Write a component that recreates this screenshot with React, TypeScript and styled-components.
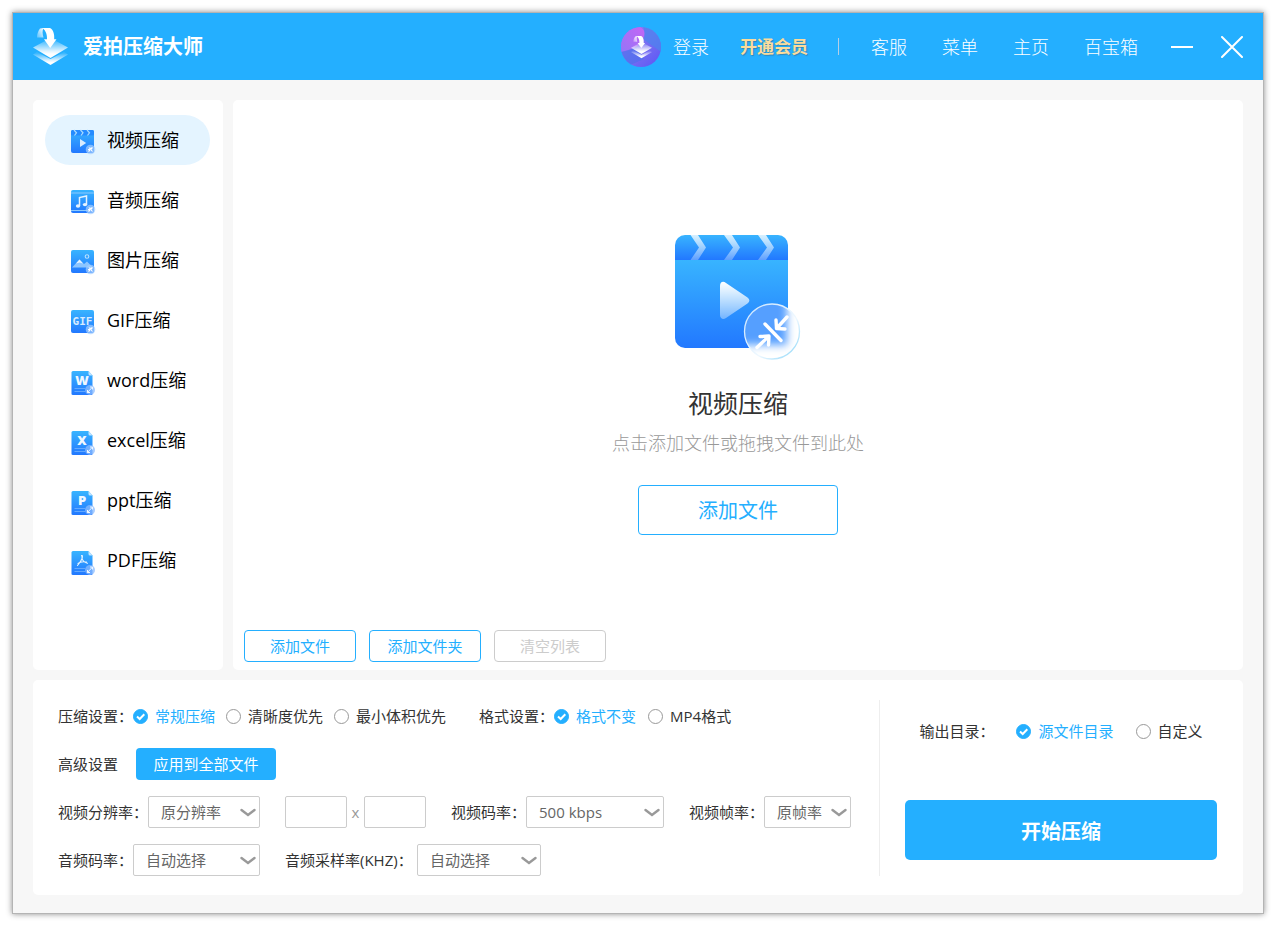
import React, { useId } from "react";
import styled, { createGlobalStyle, css } from "styled-components";

const blue = "#24afff";

const GlobalStyle = createGlobalStyle`
  *, *::before, *::after { box-sizing: border-box; }
  body {
    margin: 0;
    background: #fff;
    color: #333;
    font: 15px/20px "Open Sans", "Noto Sans CJK SC", sans-serif;
  }
  button, input, select { font: inherit; color: inherit; margin: 0; }
  button { cursor: pointer; }
`;

const Page = styled.div`
  min-height: 100vh;
  padding: 13px 12px 12px 13px;
  display: flex;
`;

const AppWindow = styled.div`
  flex: 1;
  display: flex;
  flex-direction: column;
  background: #f7f7f7;
  box-shadow: 0 0 0 1px #b4b4b4, 0 0 6px 1px rgba(0, 0, 0, 0.45);
`;

const Header = styled.header`
  height: 67px;
  padding: 0 20px;
  display: flex;
  align-items: center;
  background: ${blue};
  color: #fff;
`;

const Brand = styled.h1`
  margin: 0 auto 0 15px;
  font-size: 20px;
  line-height: 28px;
  font-weight: 700;
`;

const HeaderLink = styled.a`
  color: #fff;
  font-size: 18px;
  line-height: 24px;
  font-weight: 300;
  text-decoration: none;
`;

const Account = styled.div`
  display: flex;
  align-items: center;
  gap: 12px;
`;

const Vip = styled.a`
  margin: 0 30px 0 31px;
  font-size: 17px;
  line-height: 24px;
  font-weight: 700;
  text-decoration: none;
  color: #fbdc9d;
  text-shadow: 1px 1px 1px rgba(60, 100, 120, 0.55);
`;

const Separator = styled.span`
  width: 1px;
  height: 17px;
  background: #b5cfe6;
`;

const Nav = styled.nav`
  display: flex;
  gap: 35px;
  margin: 0 33px 0 32px;
`;

const WindowButtons = styled.div`
  display: flex;
  gap: 28px;
`;

const WindowButton = styled.button`
  width: 22px;
  height: 22px;
  padding: 0;
  border: 0;
  background: none;
  display: flex;
`;

const Body = styled.div`
  flex: 1;
  display: flex;
  flex-direction: column;
  gap: 10px;
  padding: 20px 20px 18px;
`;

const Workspace = styled.div`
  flex: 1;
  display: flex;
  gap: 10px;
`;

const Sidebar = styled.nav`
  width: 190px;
  padding: 15px 13px 15px 12px;
  display: flex;
  flex-direction: column;
  gap: 10px;
  background: #fff;
  border-radius: 5px;
`;

const SideItem = styled.a<{ $active?: boolean }>`
  height: 50px;
  padding-left: 25px;
  display: flex;
  align-items: center;
  gap: 11px;
  border-radius: 25px;
  background: ${(p) => (p.$active ? "#e4f4ff" : "transparent")};
  color: #000;
  font-size: 18px;
  line-height: 24px;
  text-decoration: none;
`;

const MainPanel = styled.main`
  flex: 1;
  display: flex;
  flex-direction: column;
  padding: 0 11px 8px;
  background: #fff;
  border-radius: 5px;
`;

const DropZone = styled.section`
  flex: 1;
  padding-top: 40px;
  display: flex;
  flex-direction: column;
  align-items: center;
  justify-content: center;
`;

const DropTitle = styled.h2`
  margin: 25px 0 10px;
  font-size: 25px;
  line-height: 36px;
  font-weight: 400;
`;

const DropHint = styled.p`
  margin: 0 0 30px;
  font-size: 18px;
  line-height: 24px;
  font-weight: 300;
  color: #999;
`;

const OutlineButton = styled.button<{ $large?: boolean }>`
  width: ${(p) => (p.$large ? 200 : 112)}px;
  height: ${(p) => (p.$large ? 50 : 32)}px;
  padding: ${(p) => (p.$large ? "2px 0 0" : "0")};
  border: 1px solid ${blue};
  border-radius: 4px;
  background: #fff;
  color: ${blue};
  font-size: ${(p) => (p.$large ? 20 : 15)}px;
  &:disabled { border-color: #ccc; color: #ccc; cursor: default; }
`;

const ListActions = styled.div`
  display: flex;
  gap: 13px;
`;

const SettingsPanel = styled.form`
  display: flex;
  padding: 20px 26px 19px 25px;
  background: #fff;
  border-radius: 5px;
`;

const SettingsRows = styled.div`
  flex: 1;
  display: flex;
  flex-direction: column;
  gap: 16px;
`;

const Row = styled.div<{ $gap?: number }>`
  height: 32px;
  display: flex;
  align-items: center;
  gap: ${(p) => p.$gap ?? 25}px;
  white-space: nowrap;
`;

const Field = styled.div<{ $labelWidth?: number }>`
  display: flex;
  align-items: center;
  label { min-width: ${(p) => p.$labelWidth ?? 0}px; }
`;

const Group = styled.fieldset<{ $gap: number; $labelGap: number }>`
  display: flex;
  align-items: center;
  gap: ${(p) => p.$gap}px;
  margin: 0;
  padding: 0;
  border: 0;
  legend { float: left; padding: 0; margin-right: ${(p) => p.$labelGap - p.$gap}px; }
`;

const Option = styled.label`
  display: flex;
  align-items: center;
  gap: 7px;
  cursor: pointer;
  &:has(input:checked) { color: ${blue}; }
`;

const RadioMark = styled.span`
  position: relative;
  display: flex;
  width: 15px;
  height: 15px;
  svg { position: absolute; inset: 0; visibility: hidden; pointer-events: none; }
  input:checked + svg { visibility: visible; }
`;

const RadioInput = styled.input`
  appearance: none;
  width: 15px;
  height: 15px;
  border: 1px solid #999;
  border-radius: 50%;
  background: #fff;
  &:checked { background: ${blue}; border-color: ${blue}; }
`;

const solid = css`
  border: 0;
  background: ${blue};
  color: #fff;
`;

const ApplyButton = styled.button`
  ${solid}
  width: 140px;
  height: 32px;
  padding: 0;
  border-radius: 4px;
`;

const StartButton = styled.button`
  ${solid}
  height: 60px;
  padding: 3px 0 0;
  border-radius: 5px;
  font-size: 20px;
  font-weight: 700;
`;

const SelectBox = styled.span<{ $width: number }>`
  position: relative;
  display: flex;
  width: ${(p) => p.$width}px;
  svg { position: absolute; right: 4px; top: 12px; pointer-events: none; }
`;

const SelectInput = styled.select`
  appearance: none;
  width: 100%;
  height: 32px;
  padding: 0 20px 0 12px;
  border: 1px solid #ccc;
  border-radius: 2px;
  background: #fff;
  color: #666;
`;

const SizeInputs = styled.div`
  display: flex;
  align-items: center;
  color: #999;
  span { width: 17px; text-align: center; }
`;

const SizeInput = styled.input`
  width: 62px;
  height: 32px;
  padding: 0 6px;
  border: 1px solid #ccc;
  border-radius: 2px;
  background: #fff;
`;

const OutputColumn = styled.div`
  width: 338px;
  padding: 15px 0 15px 25px;
  border-left: 1px solid #eee;
  display: flex;
  flex-direction: column;
  gap: 53px;
`;

const OutputRow = styled.div`
  height: 32px;
  display: flex;
  align-items: center;
  justify-content: center;
  white-space: nowrap;
`;

function LogoShapes() {
  const id = useId();
  return (
    <>
      <defs>
        <linearGradient id={id} x1="0" y1="0" x2="0" y2="1">
          <stop offset="0.1" stopColor="#fff" stopOpacity="0.1" />
          <stop offset="0.65" stopColor="#fff" stopOpacity="0.85" />
          <stop offset="0.8" stopColor="#fff" />
        </linearGradient>
        <linearGradient id={id + "t"} x1="1" y1="0" x2="0" y2="1">
          <stop offset="0" stopColor="#fff" />
          <stop offset="1" stopColor="#fff" stopOpacity="0.25" />
        </linearGradient>
      </defs>
      <path d="M0 27.5 4 25 17.500 32 31 25 35 27.500 17.500 38Z" fill={`url(#${id})`} />
      <path d="M0 20.500 17.500 11 35 20.500 17.500 31Z" fill={`url(#${id})`} />
      <path d="M7 1.500 10.500 1C9 4 9.500 7 10.500 10.500H4C4 7 5 4 7 1.500Z" fill={`url(#${id}t)`} />
      <path d="M9.500 1H17C20.500 3 21.500 7 21.200 12.300H23.500L17.200 21 11 12.300H14C14.200 7.500 13 4 9.500 1Z" fill="#fff" />
    </>
  );
}

function Logo() {
  return (
    <svg width="35" height="39" viewBox="0 0 35 39" aria-hidden="true">
      <LogoShapes />
    </svg>
  );
}

function Avatar() {
  return (
    <svg width="40" height="40" viewBox="0 0 40 40" aria-hidden="true">
      <defs>
        <linearGradient id="avatar" x1="0" y1="0" x2="1" y2="1">
          <stop offset="0" stopColor="#a275f4" />
          <stop offset="0.45" stopColor="#7b72f2" />
          <stop offset="1" stopColor="#5b55f4" />
        </linearGradient>
        <linearGradient id="avatarPink" x1="1" y1="0" x2="0" y2="1">
          <stop offset="0" stopColor="#c565f5" />
          <stop offset="1" stopColor="#9475f7" />
        </linearGradient>
        <clipPath id="avatarClip"><circle cx="20" cy="20" r="20" /></clipPath>
      </defs>
      <g clipPath="url(#avatarClip)">
        <rect width="40" height="40" fill="url(#avatar)" />
        <path d="M19 0C30 6 22 22 0 25V0Z" fill="url(#avatarPink)" />
        <path d="M22 0C24 4 24 8 22 12L40 25V0Z" fill="#4e83ee" opacity=".75" />
        <path d="M0 25C7 23 12 22 15 20L23 32 9 38 0 34Z" fill="#4e70ed" opacity=".7" />
      </g>
      <g transform="translate(10 8.500) scale(.6)"><LogoShapes /></g>
    </svg>
  );
}

function VideoArt() {
  return (
    <svg width="127" height="125" viewBox="0 0 127 125" aria-hidden="true">
      <defs>
        <linearGradient id="tile" x1="0" y1="0" x2="0" y2="1">
          <stop offset="0" stopColor="#38b4ff" />
          <stop offset="1" stopColor="#2278ff" />
        </linearGradient>
        <linearGradient id="artWhite" x1="0" y1="0" x2="0" y2="1">
          <stop offset="0" stopColor="#fff" />
          <stop offset="1" stopColor="#fff" stopOpacity="0.35" />
        </linearGradient>
        <linearGradient id="rim" x1="0" y1="0" x2="1" y2="1">
          <stop offset="0" stopColor="#c6e3ff" />
          <stop offset="0.6" stopColor="#eef8ff" />
          <stop offset="0.9" stopColor="#9ddcfa" />
        </linearGradient>
        <clipPath id="tileClip"><rect width="113" height="113" rx="10" /></clipPath>
        <clipPath id="badgeClip"><circle cx="97" cy="96.500" r="27.500" /></clipPath>
        <filter id="soft" x="-30%" y="-30%" width="160%" height="160%"><feGaussianBlur stdDeviation="4" /></filter>
      </defs>
      <g clipPath="url(#tileClip)">
        <rect y="25" width="113" height="88" fill="url(#tile)" />
        <rect width="113" height="25" fill="url(#tile)" />
        <path d="M15.500 0H23L31 12.500 23 25H15.500L24 12.500ZM49 0H57L65 12.500 57 25H49L58 12.500ZM83 0H91L99 12.500 91 25H83L92 12.500Z" fill="url(#artWhite)" opacity=".8" />
      </g>
      <path d="M45 51C45 47 48 45.500 51 48L72.500 62.500C75 64.500 75 66.500 72.500 68.500L51 83C48 85 45 83.500 45 80Z" fill="url(#artWhite)" />
      <g clipPath="url(#badgeClip)">
        <rect x="68" y="68" width="58" height="58" fill="#fff" />
        <rect x="50" y="50" width="62" height="60" fill="#559fff" filter="url(#soft)" />
      </g>
      <circle cx="97" cy="96.500" r="27.500" fill="none" stroke="url(#rim)" strokeWidth="1.300" />
      <g fill="none" stroke="#fff" strokeWidth="3.400" strokeLinecap="round" strokeLinejoin="round">
        <path d="M90 89 106 105.500M112 82 102 93M101 85 101.500 93.500 110 94M82 112.500 93 102M85 101.500 94 101 93.500 110" />
      </g>
    </svg>
  );
}

type Kind = "video" | "audio" | "image" | "gif" | "word" | "excel" | "ppt" | "pdf";

function TypeIcon({ kind }: { kind: Kind }) {
  const id = useId();
  const isDoc = kind === "word" || kind === "excel" || kind === "ppt" || kind === "pdf";
  const letter = { word: "W", excel: "X", ppt: "P" }[kind as string];
  return (
    <svg width="26" height="30" viewBox={isDoc ? "0 -4 26 30" : "0 -3 26 30"} aria-hidden="true">
      <defs>
        <linearGradient id={id} x1="0" y1="0" x2="0" y2="1">
          <stop offset="0" stopColor="#38b4ff" />
          <stop offset="1" stopColor="#2278ff" />
        </linearGradient>
      </defs>
      {isDoc ? (
        <>
          <path d="M3 2H18.500L22.500 6.500V25Q22.500 26 21.500 26H3Q1.500 26 1.500 25V3.500Q1.500 2 3 2Z" fill={`url(#${id})`} />
          <path d="M18.500 2V5Q18.500 6.500 20 6.500H22.500Z" fill="#c2e4ff" />
          <path d="M4.500 19.500H15M4.500 22.500H15" stroke="#69adff" strokeWidth="0.900" />
          {letter && (
            <text x="12" y="16" textAnchor="middle" fontFamily="Open Sans, sans-serif" fontSize="13" fontWeight="800" fill="#f0f8ff">{letter}</text>
          )}
          {kind === "pdf" && (
            <path d="M11.500 6.500C13.500 6 12.500 11 7.500 16.500M11.800 7C11.800 11 14 13.500 17.500 14.300M8 14.500C10 12.800 13 12.300 16.500 13" fill="none" stroke="#e6f3ff" strokeWidth="1.100" strokeLinecap="round" />
          )}
          <circle cx="20" cy="21" r="5" fill="#8bbcff" opacity=".75" />
          <path d="M17.500 23.500 22.500 18M17.500 21V23.500H20M20 18H22.500V20.500" fill="none" stroke="#f2f8ff" strokeWidth="1" />
        </>
      ) : (
        <>
          <rect x="1" y="2" width="23" height="23" rx="2" fill={`url(#${id})`} />
          {kind === "video" && (
            <>
              <rect x="1" y="2" width="23" height="5.500" rx="1.500" fill="#258bff" />
              <path d="M4 2 6.500 4.800 4.500 7.500M10.500 2 13 4.800 11 7.500M17 2 19.500 4.800 17.500 7.500" fill="none" stroke="#a9dcff" strokeWidth="1.200" />
              <path d="M10 11V19L16.200 15Z" fill="#d8ecff" />
            </>
          )}
          {kind === "audio" && (
            <>
              <path d="M1 5H24M1 22.500H20" stroke="#8ccaff" strokeWidth="1" />
              <path d="M9.500 18V9.500L16.500 8V16.500" fill="none" stroke="#e6f3ff" strokeWidth="1.500" />
              <ellipse cx="8" cy="18" rx="2.200" ry="1.700" fill="#e6f3ff" />
              <ellipse cx="15" cy="16.600" rx="2.200" ry="1.700" fill="#e6f3ff" />
            </>
          )}
          {kind === "image" && (
            <>
              <path d="M2 19.500 9.500 11.500 14 16 17 13.500 23 19.500Z" fill="#8cc5ff" />
              <path d="M6 15.500 9.500 11.500 13 15.500 9.500 14.500Z" fill="#e8f4ff" />
              <circle cx="17" cy="8.500" r="1.800" fill="none" stroke="#b8e0ff" strokeWidth="1.100" />
            </>
          )}
          {kind === "gif" && (
            <text x="12.500" y="17" textAnchor="middle" fontFamily="DejaVu Sans Mono, monospace" fontSize="11" fontWeight="700" fill="#d6ebff">GIF</text>
          )}
          <circle cx="20.500" cy="21.500" r="4.800" fill="#a4ceff" opacity=".7" />
          <path d="M18.500 23.500 20 22M22.500 19.500 21 21M18 21.500H20M21 21.500V19.500M19 19.500 22.500 23.500" fill="none" stroke="#fff" strokeWidth="1.100" />
        </>
      )}
    </svg>
  );
}

function Radio({ name, label, checked }: { name: string; label: string; checked?: boolean }) {
  return (
    <Option>
      <RadioMark>
        <RadioInput type="radio" name={name} defaultChecked={checked} />
        <svg width="15" height="15" viewBox="0 0 15 15" aria-hidden="true">
          <path d="M4 7.500 6.700 10 11.300 5.300" fill="none" stroke="#fff" strokeWidth="2" />
        </svg>
      </RadioMark>
      {label}
    </Option>
  );
}

interface SelectFieldProps {
  label: string;
  value: string;
  width: number;
  labelWidth?: number;
}

function SelectField({ label, value, width, labelWidth }: SelectFieldProps) {
  const id = useId();
  return (
    <Field $labelWidth={labelWidth}>
      <label htmlFor={id}>{label}</label>
      <SelectBox $width={width}>
        <SelectInput id={id} defaultValue={value}>
          <option>{value}</option>
        </SelectInput>
        <svg width="16" height="9" viewBox="0 0 16 9" aria-hidden="true">
          <path d="M1.500 2 8 7 14.500 2" fill="none" stroke="#999" strokeWidth="2.400" strokeLinecap="round" />
        </svg>
      </SelectBox>
    </Field>
  );
}

const kinds: { kind: Kind; label: string }[] = [
  { kind: "video", label: "视频压缩" },
  { kind: "audio", label: "音频压缩" },
  { kind: "image", label: "图片压缩" },
  { kind: "gif", label: "GIF压缩" },
  { kind: "word", label: "word压缩" },
  { kind: "excel", label: "excel压缩" },
  { kind: "ppt", label: "ppt压缩" },
  { kind: "pdf", label: "PDF压缩" },
];

export default function App() {
  return (
    <Page lang="zh-CN">
      <GlobalStyle />
      <AppWindow>
        <Header>
          <Logo />
          <Brand>爱拍压缩大师</Brand>
          <Account>
            <Avatar />
            <HeaderLink href="#login">登录</HeaderLink>
          </Account>
          <Vip href="#vip">开通会员</Vip>
          <Separator />
          <Nav>
            <HeaderLink href="#service">客服</HeaderLink>
            <HeaderLink href="#menu">菜单</HeaderLink>
            <HeaderLink href="#home">主页</HeaderLink>
            <HeaderLink href="#toolbox">百宝箱</HeaderLink>
          </Nav>
          <WindowButtons>
            <WindowButton type="button" aria-label="最小化">
              <svg width="22" height="22" viewBox="0 0 22 22"><path d="M0 11H22" stroke="#fff" strokeWidth="2" /></svg>
            </WindowButton>
            <WindowButton type="button" aria-label="关闭">
              <svg width="22" height="22" viewBox="0 0 22 22"><path d="M1 1 21 21M21 1 1 21" stroke="#fff" strokeWidth="2" strokeLinecap="round" /></svg>
            </WindowButton>
          </WindowButtons>
        </Header>
        <Body>
          <Workspace>
            <Sidebar>
              {kinds.map(({ kind, label }) => (
                <SideItem key={kind} href={`#${kind}`} $active={kind === "video"}>
                  <TypeIcon kind={kind} />
                  {label}
                </SideItem>
              ))}
            </Sidebar>
            <MainPanel>
              <DropZone>
                <VideoArt />
                <DropTitle>视频压缩</DropTitle>
                <DropHint>点击添加文件或拖拽文件到此处</DropHint>
                <OutlineButton type="button" $large>添加文件</OutlineButton>
              </DropZone>
              <ListActions>
                <OutlineButton type="button">添加文件</OutlineButton>
                <OutlineButton type="button">添加文件夹</OutlineButton>
                <OutlineButton type="button" disabled>清空列表</OutlineButton>
              </ListActions>
            </MainPanel>
          </Workspace>
          <SettingsPanel>
            <SettingsRows>
              <Row $gap={33}>
                <Group $gap={11} $labelGap={0}>
                  <legend>压缩设置：</legend>
                  <Radio name="mode" label="常规压缩" checked />
                  <Radio name="mode" label="清晰度优先" />
                  <Radio name="mode" label="最小体积优先" />
                </Group>
                <Group $gap={12} $labelGap={0}>
                  <legend>格式设置：</legend>
                  <Radio name="format" label="格式不变" checked />
                  <Radio name="format" label="MP4格式" />
                </Group>
              </Row>
              <Row $gap={18}>
                <span>高级设置</span>
                <ApplyButton type="button">应用到全部文件</ApplyButton>
              </Row>
              <Row>
                <SelectField label="视频分辨率：" value="原分辨率" width={112} />
                <SizeInputs>
                  <SizeInput type="text" aria-label="宽度" />
                  <span>x</span>
                  <SizeInput type="text" aria-label="高度" />
                </SizeInputs>
                <SelectField label="视频码率：" value="500 kbps" width={138} />
                <SelectField label="视频帧率：" value="原帧率" width={87} />
              </Row>
              <Row>
                <SelectField label="音频码率：" value="自动选择" width={127} />
                <SelectField label="音频采样率(KHZ)：" value="自动选择" width={124} labelWidth={132} />
              </Row>
            </SettingsRows>
            <OutputColumn>
              <OutputRow>
                <Group $gap={22} $labelGap={22}>
                  <legend>输出目录：</legend>
                  <Radio name="output" label="源文件目录" checked />
                  <Radio name="output" label="自定义" />
                </Group>
              </OutputRow>
              <StartButton type="button">开始压缩</StartButton>
            </OutputColumn>
          </SettingsPanel>
        </Body>
      </AppWindow>
    </Page>
  );
}
